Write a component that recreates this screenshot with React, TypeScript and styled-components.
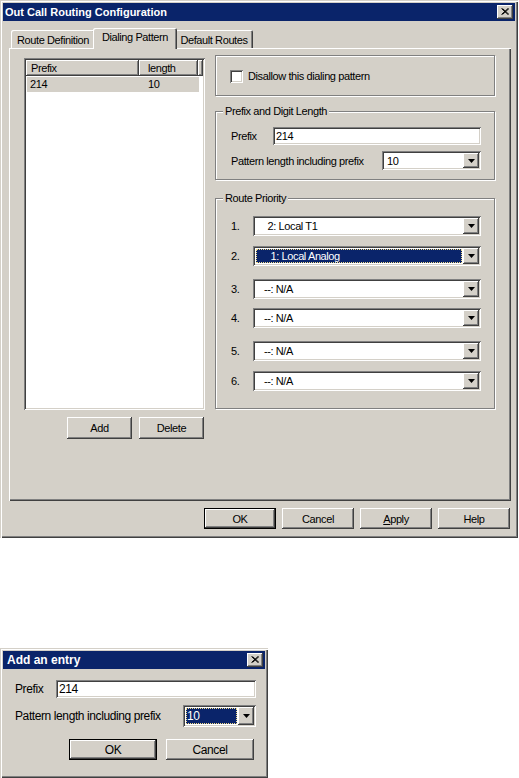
import React from "react";
import styled, { createGlobalStyle, css } from "styled-components";

const GlobalStyle = createGlobalStyle`
  html, body { margin: 0; padding: 0; background: #ffffff; }
  body {
    font-family: "Liberation Sans", Arial, sans-serif;
    font-size: 11px;
    color: #000;
  }
  * { box-sizing: border-box; }
`;

const raised = css`
  box-shadow: inset -1px -1px #404040, inset 1px 1px #ffffff,
    inset -2px -2px #808080, inset 2px 2px #d4d0c8;
`;
const sunken = css`
  box-shadow: inset 1px 1px #808080, inset -1px -1px #ffffff,
    inset 2px 2px #404040, inset -2px -2px #d4d0c8;
`;
const etched = css`
  border: 1px solid #808080;
  box-shadow: inset 1px 1px #ffffff, 1px 1px #ffffff;
`;

const Page = styled.div`
  display: flex;
  flex-direction: column;
  align-items: flex-start;
  gap: 110px;
`;

const Window = styled.section<{ $w: number; $fs: number }>`
  width: ${(p) => p.$w}px;
  font-size: ${(p) => p.$fs}px;
  background: #d4d0c8;
  padding: 3px;
  letter-spacing: -0.4px;
  box-shadow: inset 1px 1px #d4d0c8, inset 2px 2px #ffffff,
    inset -1px -1px #404040, inset -2px -2px #808080;
`;

const TitleBar = styled.header<{ $pad: number }>`
  height: 18px;
  background: #0a246a;
  color: #ffffff;
  font-weight: bold;
  letter-spacing: 0;
  display: flex;
  align-items: center;
  justify-content: space-between;
  padding: 0 2px 0 ${(p) => p.$pad}px;
`;

const CloseButton = styled.div`
  width: 16px;
  height: 14px;
  background: #d4d0c8;
  ${raised};
  display: flex;
  align-items: center;
  justify-content: center;
  padding-bottom: 1px;
`;

const MainBody = styled.div`
  padding: 7px 4px 6px 6px;
`;

const TabStrip = styled.div`
  display: flex;
  align-items: flex-end;
  height: 20px;
  padding-left: 2px;
  position: relative;
  z-index: 1;
`;

const Tab = styled.div<{ $w: number; $active?: boolean }>`
  width: ${(p) => p.$w}px;
  height: ${(p) => (p.$active ? 21 : 18)}px;
  margin: ${(p) => (p.$active ? "0 -2px -1px" : "0")};
  position: relative;
  z-index: ${(p) => (p.$active ? 2 : 1)};
  background: #d4d0c8;
  border-radius: 2px 2px 0 0;
  box-shadow: inset 1px 1px #ffffff, inset -1px 0 #404040, inset -2px 0 #808080;
  display: flex;
  align-items: ${(p) => (p.$active ? "flex-start" : "center")};
  padding-top: ${(p) => (p.$active ? 3 : 1)}px;
  justify-content: center;
  white-space: nowrap;
`;

const Panel = styled.div`
  height: 453px;
  box-shadow: inset 1px 1px #ffffff, inset -1px -1px #404040,
    inset -2px -2px #808080;
  display: flex;
  gap: 10px;
  padding: 7px 0 0 15px;
`;

const LeftCol = styled.div`
  width: 181px;
  margin-top: 3px;
  display: flex;
  flex-direction: column;
`;

const ListView = styled.div`
  height: 352px;
  background: #ffffff;
  ${sunken};
  padding: 2px;
`;

const ListHeader = styled.div`
  display: flex;
  height: 16px;
`;

const HeaderCell = styled.div<{ $w?: number; $pad: number }>`
  ${(p) => (p.$w ? `width: ${p.$w}px;` : "flex: 1;")}
  padding-left: ${(p) => p.$pad}px;
  line-height: 16px;
  background: #d4d0c8;
  box-shadow: inset -1px -1px #404040, inset 1px 1px #ffffff,
    inset -2px -2px #808080;
`;

const ListRow = styled.div`
  display: flex;
  height: 15px;
  margin: 1px 4px 0 1px;
  background: #d4d0c8;
`;

const RowCell = styled.div<{ $w?: number; $pad: number }>`
  ${(p) => (p.$w ? `width: ${p.$w}px;` : "flex: 1;")}
  padding-left: ${(p) => p.$pad}px;
  line-height: 15px;
`;

const ListButtons = styled.div`
  display: flex;
  gap: 7px;
  margin-top: 7px;
  padding-left: 43px;
`;

const Button = styled.div<{ $w: number; $h: number; $default?: boolean }>`
  width: ${(p) => p.$w}px;
  height: ${(p) => p.$h}px;
  background: #d4d0c8;
  display: flex;
  align-items: center;
  justify-content: center;
  ${(p) =>
    p.$default
      ? css`
          box-shadow: inset 0 0 0 1px #000000, inset -2px -2px #404040,
            inset 2px 2px #ffffff, inset -3px -3px #808080;
        `
      : raised};
`;

const RightCol = styled.div`
  width: 281px;
  display: flex;
  flex-direction: column;
`;

const CheckGroup = styled.div`
  ${etched};
  width: 280px;
  height: 41px;
  display: flex;
  align-items: center;
  gap: 5px;
  padding: 1px 0 0 14px;
`;

const CheckBox = styled.div`
  width: 13px;
  height: 13px;
  background: #ffffff;
  ${sunken};
`;

const Group = styled.div<{ $top: number; $h: number }>`
  ${etched};
  position: relative;
  width: 280px;
  height: ${(p) => p.$h}px;
  margin-top: ${(p) => p.$top}px;
  padding: 0 13px 0 15px;
`;

const Legend = styled.span`
  position: absolute;
  top: -8px;
  left: 7px;
  padding: 0 2px;
  background: #d4d0c8;
  line-height: 14px;
`;

const FieldRow = styled.div<{ $top: number; $h: number }>`
  display: flex;
  align-items: center;
  height: ${(p) => p.$h}px;
  margin-top: ${(p) => p.$top}px;
`;

const FieldLabel = styled.span<{ $w?: number }>`
  ${(p) => (p.$w ? `width: ${p.$w}px;` : "flex: 1;")}
  white-space: nowrap;
`;

const TextBox = styled.div<{ $h: number }>`
  flex: 1;
  height: ${(p) => p.$h}px;
  background: #ffffff;
  ${sunken};
  padding: 0 3px;
  display: flex;
  align-items: center;
`;

const Combo = styled.div<{ $w: number; $h: number }>`
  width: ${(p) => p.$w}px;
  height: ${(p) => p.$h}px;
  background: #ffffff;
  ${sunken};
  padding: 2px;
  display: flex;
`;

const ComboValue = styled.div<{ $selected?: boolean; $indent: number }>`
  flex: 1;
  margin: 1px;
  padding-left: ${(p) => p.$indent}px;
  display: flex;
  align-items: center;
  white-space: pre;
  ${(p) =>
    p.$selected &&
    css`
      background: #0a246a;
      color: #ffffff;
      outline: 1px dotted #f2dc8a;
      outline-offset: -1px;
    `}
`;

const ComboArrow = styled.div`
  width: 16px;
  background: #d4d0c8;
  ${raised};
  display: flex;
  align-items: center;
  justify-content: center;
`;

const NumLabel = styled.span`
  width: 22px;
`;

const ButtonBar = styled.div<{ $gap: number; $justify: string; $pad: number; $top: number }>`
  display: flex;
  justify-content: ${(p) => p.$justify};
  gap: ${(p) => p.$gap}px;
  margin-top: ${(p) => p.$top}px;
  padding-left: ${(p) => p.$pad}px;
  padding-right: 1px;
`;

const DialogBody = styled.div`
  padding: 11px 9px 15px 12px;
`;

const XIcon = () => (
  <svg width="8" height="7" viewBox="0 0 8 7">
    <path d="M0.5 0.5 L7 6.5 M1.5 0.5 L8 6.5 M7 0.5 L0.5 6.5 M8 0.5 L1.5 6.5" stroke="#000" strokeWidth="1" fill="none" />
  </svg>
);

const DownArrow = () => (
  <svg width="7" height="4" viewBox="0 0 7 4">
    <path d="M0 0 H7 L3.5 4 Z" fill="#000" />
  </svg>
);

const Select = ({
  w,
  h,
  value,
  selected,
  indent = 7,
}: {
  w: number;
  h: number;
  value: string;
  selected?: boolean;
  indent?: number;
}) => (
  <Combo $w={w} $h={h}>
    <ComboValue $selected={selected} $indent={indent}>
      {value}
    </ComboValue>
    <ComboArrow>
      <DownArrow />
    </ComboArrow>
  </Combo>
);

const routes = [
  { n: "1.", v: " 2: Local T1", top: 17, indent: 9 },
  { n: "2.", v: " 1: Local Analog", top: 10, indent: 12, sel: true },
  { n: "3.", v: "--: N/A", top: 13, indent: 8 },
  { n: "4.", v: "--: N/A", top: 9, indent: 8 },
  { n: "5.", v: "--: N/A", top: 13, indent: 8 },
  { n: "6.", v: "--: N/A", top: 10, indent: 8 },
];

export default function App() {
  return (
    <>
      <GlobalStyle />
      <Page>
        <Window $w={518} $fs={11}>
          <TitleBar $pad={2}>
            <span>Out Call Routing Configuration</span>
            <CloseButton>
              <XIcon />
            </CloseButton>
          </TitleBar>
          <MainBody>
            <TabStrip>
              <Tab $w={84}>Route Definition</Tab>
              <Tab $w={84} $active>
                Dialing Pattern
              </Tab>
              <Tab $w={78}>Default Routes</Tab>
            </TabStrip>
            <Panel>
              <LeftCol>
                <ListView>
                  <ListHeader>
                    <HeaderCell $w={113} $pad={5}>
                      Prefix
                    </HeaderCell>
                    <HeaderCell $w={59} $pad={9}>
                      length
                    </HeaderCell>
                    <HeaderCell $pad={0} />
                  </ListHeader>
                  <ListRow>
                    <RowCell $w={112} $pad={3}>
                      214
                    </RowCell>
                    <RowCell $pad={9}>10</RowCell>
                  </ListRow>
                </ListView>
                <ListButtons>
                  <Button $w={65} $h={22}>
                    Add
                  </Button>
                  <Button $w={65} $h={22}>
                    Delete
                  </Button>
                </ListButtons>
              </LeftCol>
              <RightCol>
                <CheckGroup>
                  <CheckBox />
                  <span>Disallow this dialing pattern</span>
                </CheckGroup>
                <Group $top={15} $h={69}>
                  <Legend>Prefix and Digit Length</Legend>
                  <FieldRow $top={15} $h={18}>
                    <FieldLabel $w={42}>Prefix</FieldLabel>
                    <TextBox $h={18}>214</TextBox>
                  </FieldRow>
                  <FieldRow $top={6} $h={19}>
                    <FieldLabel>Pattern length including prefix</FieldLabel>
                    <Select w={99} h={19} value="10" indent={2} />
                  </FieldRow>
                </Group>
                <Group $top={18} $h={211}>
                  <Legend>Route Priority</Legend>
                  {routes.map((r) => (
                    <FieldRow key={r.n} $top={r.top} $h={20}>
                      <NumLabel>{r.n}</NumLabel>
                      <Select w={229} h={20} value={r.v} selected={r.sel} indent={r.indent} />
                    </FieldRow>
                  ))}
                </Group>
              </RightCol>
            </Panel>
            <ButtonBar $gap={6} $justify="flex-end" $pad={0} $top={7}>
              <Button $w={72} $h={21} $default>
                OK
              </Button>
              <Button $w={72} $h={21}>
                Cancel
              </Button>
              <Button $w={72} $h={21}>
                <span>
                  <u>A</u>pply
                </span>
              </Button>
              <Button $w={72} $h={21}>
                Help
              </Button>
            </ButtonBar>
          </MainBody>
        </Window>

        <Window $w={268} $fs={12}>
          <TitleBar $pad={4}>
            <span>Add an entry</span>
            <CloseButton>
              <XIcon />
            </CloseButton>
          </TitleBar>
          <DialogBody>
            <FieldRow $top={0} $h={18}>
              <FieldLabel $w={41}>Prefix</FieldLabel>
              <TextBox $h={18}>214</TextBox>
            </FieldRow>
            <FieldRow $top={7} $h={22}>
              <FieldLabel>Pattern length including prefix</FieldLabel>
              <Select w={73} h={22} value="10" selected indent={1} />
            </FieldRow>
            <ButtonBar $gap={9} $justify="flex-start" $pad={54} $top={12}>
              <Button $w={88} $h={21} $default>
                OK
              </Button>
              <Button $w={88} $h={21}>
                Cancel
              </Button>
            </ButtonBar>
          </DialogBody>
        </Window>
      </Page>
    </>
  );
}
